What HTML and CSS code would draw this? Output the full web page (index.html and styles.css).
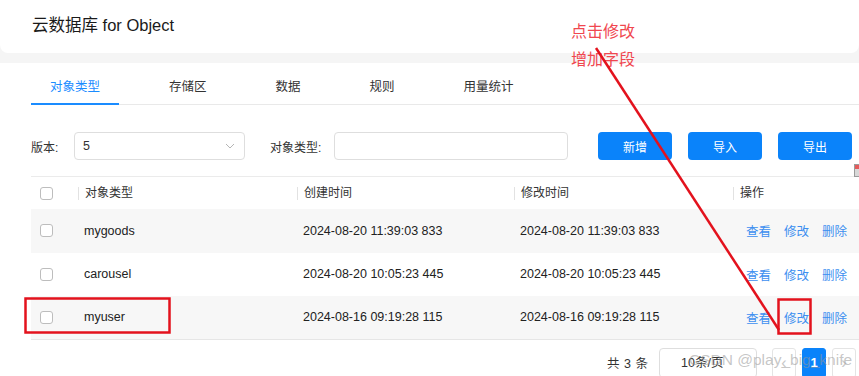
FILE: index.html
```html
<!DOCTYPE html>
<html lang="zh-CN">
<head>
    <meta charset="UTF-8">
    <meta name="viewport" content="width=device-width, initial-scale=1.0">
    <title>云数据库 for Object</title>
    <link rel="stylesheet" href="styles.css">
</head>
<body>
    <div class="header">
        <h1 class="header-title">云数据库 for Object</h1>
    </div>

    <div class="main">
        <div class="tabs">
            <div class="tab active">对象类型</div>
            <div class="tab">存储区</div>
            <div class="tab">数据</div>
            <div class="tab">规则</div>
            <div class="tab">用量统计</div>
        </div>

        <div class="filters">
            <span class="filter-label version-label">版本:</span>
            <div class="select version-select">
                <span>5</span>
                <svg class="chevron" width="10" height="6" viewBox="0 0 10 6" fill="none" stroke="#b5b5b5" stroke-width="1">
                    <path d="M1 1l4 4 4-4"/>
                </svg>
            </div>
            <span class="filter-label type-label">对象类型:</span>
            <div class="input type-input"></div>
            <button class="btn">新增</button>
            <button class="btn">导入</button>
            <button class="btn">导出</button>
        </div>

        <div class="table">
            <div class="table-head">
                <div class="cell"><span class="checkbox"></span></div>
                <div class="cell th">对象类型</div>
                <div class="cell th">创建时间</div>
                <div class="cell th">修改时间</div>
                <div class="cell th">操作</div>
            </div>
            <div class="table-row striped">
                <div class="cell"><span class="checkbox"></span></div>
                <div class="cell">mygoods</div>
                <div class="cell">2024-08-20 11:39:03 833</div>
                <div class="cell">2024-08-20 11:39:03 833</div>
                <div class="cell actions"><a>查看</a><a>修改</a><a>删除</a></div>
            </div>
            <div class="table-row">
                <div class="cell"><span class="checkbox"></span></div>
                <div class="cell">carousel</div>
                <div class="cell">2024-08-20 10:05:23 445</div>
                <div class="cell">2024-08-20 10:05:23 445</div>
                <div class="cell actions"><a>查看</a><a>修改</a><a>删除</a></div>
            </div>
            <div class="table-row striped">
                <div class="cell"><span class="checkbox"></span></div>
                <div class="cell">myuser</div>
                <div class="cell">2024-08-16 09:19:28 115</div>
                <div class="cell">2024-08-16 09:19:28 115</div>
                <div class="cell actions"><a>查看</a><a>修改</a><a>删除</a></div>
            </div>
        </div>

        <div class="pager">
            <span class="pager-total">共 3 条</span>
            <div class="select page-size">10条/页</div>
            <div class="page-btn">&lsaquo;</div>
            <div class="page-btn current">1</div>
            <div class="page-btn">&rsaquo;</div>
        </div>
    </div>

    <!-- annotations drawn on top of the screenshot -->
    <div class="note">点击修改<br>增加字段</div>
    <svg class="marks" width="859" height="376" viewBox="0 0 859 376" fill="none" stroke="#e3121d" stroke-width="2.5">
        <line x1="596" y1="48" x2="779" y2="330"/>
        <rect x="25.5" y="298.5" width="144" height="34"/>
        <rect x="778.5" y="299.5" width="32" height="34"/>
    </svg>
    <div class="side-widget"></div>
    <div class="watermark">CSDN @play_big_knife</div>
</body>
</html>
```

FILE: styles.css
```css
* {
    margin: 0;
    padding: 0;
    box-sizing: border-box;
}

body {
    font-family: "Liberation Sans", "Noto Sans CJK SC", sans-serif;
    font-size: 12px;
    background: #f5f5f5;
    color: #333;
    width: 859px;
    height: 376px;
    overflow: hidden;
    position: relative;
}

.header {
    height: 53px;
    background: white;
    border-radius: 0 0 8px 8px;
    padding-left: 32px;
    display: flex;
    align-items: center;
    margin-bottom: 10px;
}

.header-title {
    font-size: 16.5px;
    font-weight: normal;
    color: #1a1a1a;
    margin-top: -5px;
}

.main {
    background: white;
    padding-left: 31px;
    height: 400px;
}

/* tabs */
.tabs {
    display: flex;
    gap: 31px;
    padding-top: 8px;
    border-bottom: 1px solid #e9e9e9;
}

.tab {
    height: 34px;
    line-height: 32px;
    padding: 0 19px;
    font-size: 12.5px;
    color: #333;
    border-bottom: 2px solid transparent;
    margin-bottom: -1px;
}

.tab.active {
    color: #1a8cff;
    border-bottom-color: #1a8cff;
}

/* filters */
.filters {
    display: flex;
    align-items: center;
    margin-top: 27px;
    height: 28px;
}

.filters > * {
    flex-shrink: 0;
}

.filter-label {
    font-size: 12px;
    color: #333;
}

.version-label {
    width: 43px;
}

.type-label {
    width: 64px;
}

.select,
.input {
    height: 28px;
    border: 1px solid #dedede;
    border-radius: 4px;
    background: white;
}

.version-select {
    width: 171px;
    margin-right: 25px;
    display: flex;
    align-items: center;
    justify-content: space-between;
    padding: 0 9px 0 8px;
    font-size: 12.5px;
}

.type-input {
    width: 234px;
    margin-right: 30px;
}

.btn {
    width: 74px;
    height: 28px;
    margin-right: 16px;
    background: #0a83fa;
    color: white;
    border: none;
    border-radius: 4px;
    font-family: inherit;
    font-size: 12px;
}

/* table */
.table {
    margin-top: 16px;
    border-top: 1px solid #ebebeb;
}

.table-head,
.table-row {
    display: grid;
    grid-template-columns: 47px 219px 217px 219px 1fr;
    align-items: center;
}

.table-head {
    height: 32px;
}

.table-row {
    height: 43.5px;
    font-size: 12.5px;
    color: #222;
}

.table-row:last-child {
    border-bottom: 1px solid #e6e6e6;
}

.table-row.striped {
    background: #f7f7f7;
}

.cell {
    padding-left: 6px;
}

.cell:first-child {
    padding-left: 9px;
    display: flex;
}

.th {
    border-left: 1px solid #e2e2e2;
    line-height: 13px;
    color: #333;
}

.checkbox {
    display: inline-block;
    width: 13px;
    height: 13px;
    border: 1px solid #bdbdbd;
    border-radius: 3px;
    background: white;
}

.actions {
    display: flex;
    gap: 13px;
    padding-left: 13px;
}

.actions a {
    color: #3d8ff0;
    font-size: 12.5px;
}

/* pagination */
.pager {
    display: flex;
    align-items: center;
    justify-content: flex-end;
    margin-top: 8px;
    padding-right: 3px;
}

.pager > * {
    flex-shrink: 0;
}

.pager-total {
    margin-right: 11px;
    font-size: 12.5px;
    word-spacing: 1px;
    color: #333;
}

.page-size {
    width: 98px;
    height: 30px;
    line-height: 28px;
    padding-left: 21px;
    margin-right: 9px;
    font-size: 12.5px;
}

.page-btn {
    width: 24px;
    height: 30px;
    line-height: 28px;
    text-align: center;
    border: 1px solid #e4e4e4;
    border-radius: 3px;
    color: #c8c8c8;
    font-size: 16px;
    margin-left: 6px;
}

.page-btn.current {
    background: #0a83fa;
    border-color: #0a83fa;
    color: white;
    font-weight: bold;
    font-size: 13px;
}

/* overlays */
.note {
    position: absolute;
    left: 571px;
    top: 18px;
    line-height: 28px;
    font-size: 16px;
    color: #f0474f;
}

.marks {
    position: absolute;
    left: 0;
    top: 0;
    pointer-events: none;
}

.side-widget {
    position: absolute;
    left: 854px;
    top: 164px;
    width: 8px;
    height: 13px;
    border: 1px solid #9a9a9a;
    background: linear-gradient(#e35b5b 0 40%, #d8d8d8 40%);
}

.watermark {
    position: absolute;
    left: 689px;
    top: 351px;
    font-size: 15.5px;
    color: rgba(150, 150, 150, 0.55);
}
```
